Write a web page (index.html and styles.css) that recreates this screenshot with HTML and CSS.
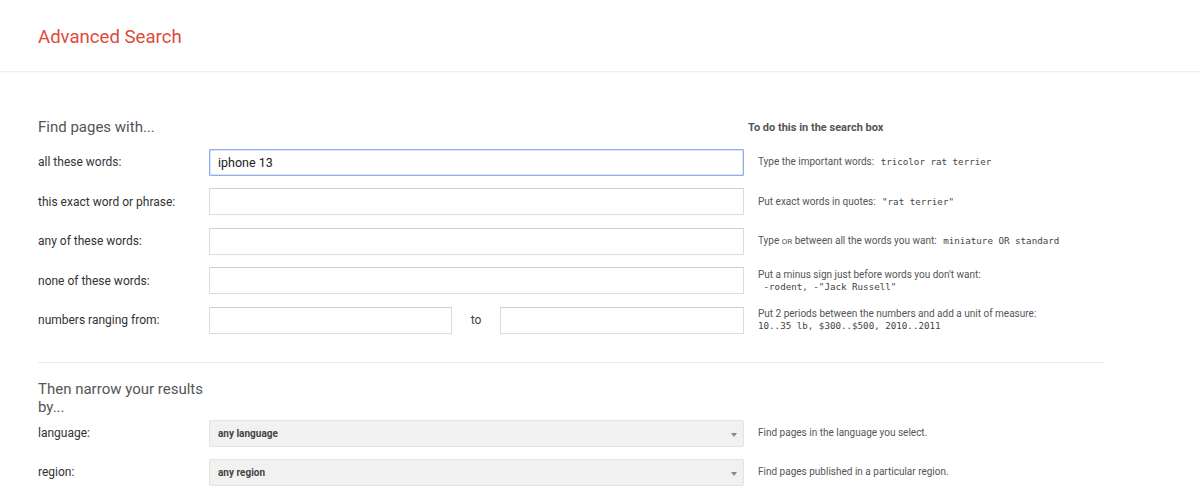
FILE: index.html
```html
<!DOCTYPE html>
<html lang="en">
  <head>
    <meta charset="UTF-8" />
    <meta name="viewport" content="width=device-width, initial-scale=1.0" />
    <title>Advanced Search</title>
    <link rel="stylesheet" href="styles.css">
  </head>
  <body>
    <header class="topbar">
      <h1>Advanced Search</h1>
    </header>

    <main class="page">
      <!-- Find pages with -->
      <section class="block">
        <div class="row head">
          <h2>Find pages with...</h2>
          <span></span>
          <h3>To do this in the search box</h3>
        </div>

        <div class="row">
          <label>all these words:</label>
          <div class="field"><input type="text" class="txt focus" value="iphone 13" /></div>
          <p class="hint">Type the important words: <code>tricolor rat terrier</code></p>
        </div>

        <div class="row">
          <label>this exact word or phrase:</label>
          <div class="field"><input type="text" class="txt" /></div>
          <p class="hint">Put exact words in quotes: <code>"rat terrier"</code></p>
        </div>

        <div class="row">
          <label>any of these words:</label>
          <div class="field"><input type="text" class="txt" /></div>
          <p class="hint">Type <span class="sc">OR</span> between all the words you want: <code>miniature OR standard</code></p>
        </div>

        <div class="row">
          <label>none of these words:</label>
          <div class="field"><input type="text" class="txt" /></div>
          <p class="hint">Put a minus sign just before words you don't want:<br /><code>&nbsp;-rodent, -"Jack Russell"</code></p>
        </div>

        <div class="row">
          <label>numbers ranging from:</label>
          <div class="field range">
            <input type="text" class="txt from" />
            <span class="to">to</span>
            <input type="text" class="txt upto" />
          </div>
          <p class="hint">Put 2 periods between the numbers and add a unit of measure:<br /><code>10..35 lb, $300..$500, 2010..2011</code></p>
        </div>
      </section>

      <hr class="divider" />

      <!-- Narrow results -->
      <section class="block narrow">
        <div class="row head">
          <h2>Then narrow your results by...</h2>
        </div>

        <div class="row">
          <label>language:</label>
          <div class="field"><div class="select">any language<span class="arrow"></span></div></div>
          <p class="hint">Find pages in the language you select.</p>
        </div>

        <div class="row">
          <label>region:</label>
          <div class="field"><div class="select">any region<span class="arrow"></span></div></div>
          <p class="hint">Find pages published in a particular region.</p>
        </div>
      </section>
    </main>
  </body>
</html>
```

FILE: styles.css
```css
* {
  margin: 0;
  padding: 0;
  box-sizing: border-box;
}

body {
  font-family: Roboto, Arial, sans-serif;
  background-color: #fff;
  color: #222;
  overflow: hidden;
}

.topbar {
  height: 72px;
  padding-left: 38px;
  display: flex;
  align-items: center;
  border-bottom: 1px solid #f0f0f0;
  box-shadow: 0 1px 2px rgba(0, 0, 0, 0.03);
}

.topbar h1 {
  font-size: 18.6px;
  font-weight: 400;
  color: #dd4b39; /* merah judul */
  margin-top: 2px;
}

.page {
  padding: 45px 0 0 38px;
  width: 1105px;
}

.block {
  display: flex;
  flex-direction: column;
  gap: 12.5px;
}

.row {
  display: grid;
  grid-template-columns: 171px 535px 1fr;
  align-items: center;
  min-height: 27px;
}

.row.head {
  min-height: 20px;
  margin-bottom: -1px;
}

.row h2 {
  font-size: 15px;
  font-weight: 400;
  color: #555;
  line-height: 20px;
}

.row h3 {
  padding-left: 4px;
  font-size: 11px;
  font-weight: 700;
  color: #555;
}

.row label {
  font-size: 12px;
  color: #333;
}

.field {
  display: flex;
  align-items: center;
}

.txt {
  width: 100%;
  height: 27px;
  border: 1px solid #dcdcdc;
  border-top-color: #cfcfcf;
  border-radius: 1px;
  padding: 0 8px;
  font-family: Roboto, Arial, sans-serif;
  font-size: 12.5px;
  color: #222;
  outline: none;
}

.txt.focus {
  border-color: #8eaee6; /* garis biru saat fokus */
  box-shadow: inset 0 0 0 0.5px #b5c9ee;
}

.range .from {
  width: 243px;
  flex: none;
}

.range .upto {
  width: 244px;
  flex: none;
}

.range .to {
  flex: 1;
  text-align: center;
  font-size: 12px;
  color: #444;
}

.hint {
  padding-left: 14px;
  font-size: 10px;
  color: #555;
  line-height: 12px;
}

.hint code {
  font-family: "DejaVu Sans Mono", "Liberation Mono", monospace;
  font-size: 9.2px;
  color: #444;
  margin-left: 4px;
}

.hint br + code {
  margin-left: 0;
}

.hint .sc {
  font-size: 8px;
}

.divider {
  border: none;
  border-top: 1px solid #ebebeb;
  margin: 28px 0 17px;
}

.narrow {
  gap: 12px;
}

.narrow .row.head h2 {
  width: 180px;
  line-height: 18px;
}

.narrow .row.head {
  margin-bottom: -8px;
}

.select {
  position: relative;
  width: 100%;
  height: 27px;
  display: flex;
  align-items: center;
  padding: 0 8px;
  background-color: #f1f1f1;
  border: 1px solid #e3e3e3;
  border-radius: 2px;
  font-size: 10px;
  font-weight: 700;
  color: #444;
}

.select .arrow {
  position: absolute;
  right: 6px;
  top: 12px;
  border-left: 3px solid transparent;
  border-right: 3px solid transparent;
  border-top: 4px solid #888;
}
```
